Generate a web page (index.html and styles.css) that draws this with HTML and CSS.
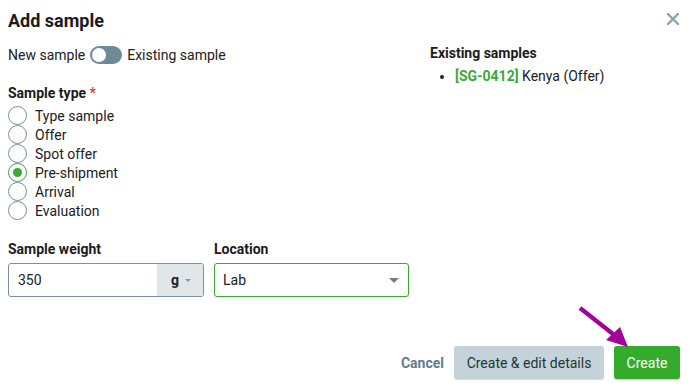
FILE: index.html
```html
<!DOCTYPE html>
<html>
<head>
<meta charset="utf-8">
<link rel="stylesheet" href="styles.css">
</head>
<body>
<div class="dialog">
  <div class="header">
    <h1 class="title">Add sample</h1>
    <button class="close" aria-label="Close">
      <svg width="12" height="12" viewBox="0 0 12 12"><path d="M1 1L11 11M11 1L1 11" stroke="#90a4ae" stroke-width="2.4" stroke-linecap="square"/></svg>
    </button>
  </div>
  <div class="content">
    <div class="left">
      <div class="toggle-row">
        <span>New sample</span>
        <span class="toggle"><span class="knob"></span></span>
        <span>Existing sample</span>
      </div>
      <div class="label label-type">Sample type <span class="req">*</span></div>
      <ul class="radios">
        <li><span class="radio"></span>Type sample</li>
        <li><span class="radio"></span>Offer</li>
        <li><span class="radio"></span>Spot offer</li>
        <li><span class="radio checked"></span>Pre-shipment</li>
        <li><span class="radio"></span>Arrival</li>
        <li><span class="radio"></span>Evaluation</li>
      </ul>
      <div class="fields">
        <div class="field weight">
          <div class="label">Sample weight</div>
          <div class="input-group">
            <span class="value">350</span>
            <span class="unit">g <span class="caret small"></span></span>
          </div>
        </div>
        <div class="field location">
          <div class="label">Location</div>
          <div class="select">
            <span class="value">Lab</span>
            <span class="caret"></span>
          </div>
        </div>
      </div>
    </div>
    <div class="right">
      <div class="label">Existing samples</div>
      <ul class="existing">
        <li><span class="code">[SG-0412]</span> Kenya (Offer)</li>
      </ul>
    </div>
  </div>
  <div class="footer">
    <button class="btn-link">Cancel</button>
    <button class="btn btn-grey">Create &amp; edit details</button>
    <button class="btn btn-green">Create</button>
  </div>
  <svg class="arrow" width="60" height="50" viewBox="575 302 60 50">
    <line x1="580" y1="308" x2="613" y2="334" stroke="#a4009c" stroke-width="4.2"/>
    <polygon points="606,340 620,327 628,347" fill="#a4009c"/>
  </svg>
</div>
</body>
</html>
```
FILE: styles.css
```css
* { box-sizing: border-box; }
html, body { margin: 0; padding: 0; background: #fff; }
body {
  font-family: Roboto, "Noto Sans", Arial, sans-serif;
  font-size: 14px;
  color: #212121;
  width: 692px;
  height: 389px;
  overflow: hidden;
}
.dialog {
  position: relative;
  padding: 0 12px 0 8px;
  height: 389px;
}
.header {
  display: flex;
  justify-content: space-between;
  align-items: center;
  height: 40px;
  padding-top: 1px;
}
.title {
  margin: 0;
  font-size: 18px;
  font-weight: 700;
  color: #1b1b1b;
  line-height: 22px;
}
.close {
  border: 0;
  background: none;
  padding: 0;
  margin-right: 1px;
  display: flex;
  margin-top: -3px;
}
.content {
  display: flex;
  margin-top: 1px;
}
.left { width: 422px; }
.right { flex: 1; padding-top: 2px; }
.toggle-row {
  display: flex;
  align-items: center;
  gap: 5px;
  height: 20px;
  margin-top: 4px;
}
.toggle {
  width: 32px;
  height: 18px;
  border-radius: 9px;
  background: #6e8a99;
  position: relative;
  display: inline-block;
}
.knob {
  position: absolute;
  left: 2px;
  top: 2px;
  width: 14px;
  height: 14px;
  border-radius: 50%;
  background: #fff;
}
.label {
  font-weight: 700;
  line-height: 20px;
  color: #1b1b1b;
}
.label-type { margin-top: 18px; }
.req { color: #e53935; }
.radios {
  list-style: none;
  margin: 3px 0 0;
  padding: 0;
}
.radios li {
  display: flex;
  align-items: center;
  height: 19px;
  gap: 8px;
  color: #212121;
}
.radio {
  width: 19px;
  height: 19px;
  border: 1.5px solid #7890a0;
  border-radius: 50%;
  display: inline-block;
  position: relative;
  background: #fff;
}
.radio.checked { border-color: #3aaa35; }
.radio.checked::after {
  content: "";
  position: absolute;
  left: 3.5px;
  top: 3.5px;
  width: 9px;
  height: 9px;
  border-radius: 50%;
  background: #3aaa35;
}
.fields {
  display: flex;
  gap: 10px;
  margin-top: 19px;
}
.field .label { margin-bottom: 4px; }
.weight { width: 196px; }
.location { width: 195px; }
.input-group {
  display: flex;
  height: 34px;
  border: 1px solid #7890a0;
  border-radius: 3px;
  overflow: hidden;
}
.input-group .value {
  flex: 1;
  display: flex;
  align-items: center;
  padding-left: 9px;
}
.unit {
  width: 46px;
  background: #e1e6e9;
  display: flex;
  align-items: center;
  justify-content: center;
  font-weight: 700;
  gap: 6px;
  padding-left: 2px;
}
.caret {
  width: 0;
  height: 0;
  border-left: 5px solid transparent;
  border-right: 5px solid transparent;
  border-top: 5px solid #7b7b7b;
}
.caret.small {
  border-left-width: 3.5px;
  border-right-width: 3.5px;
  border-top: 3.5px solid #8a9aa3;
}
.select {
  display: flex;
  align-items: center;
  justify-content: space-between;
  height: 34px;
  border: 1px solid #3aaa35;
  border-radius: 3px;
  padding: 0 9px 0 8px;
}
.existing {
  margin: 3px 0 0;
  padding-left: 25px;
  line-height: 20px;
}
.existing li::marker { font-size: 13px; }
.code { color: #3aaa35; font-weight: 700; }
.footer {
  position: absolute;
  right: 12px;
  top: 346px;
  display: flex;
  align-items: center;
  gap: 10px;
}
button { font-family: inherit; cursor: pointer; }
.btn-link {
  border: 0;
  background: none;
  color: #5f7d8c;
  font-weight: 700;
  font-size: 14px;
  padding: 0;
  margin-right: 0;
}
.btn {
  border: 0;
  height: 33px;
  border-radius: 3px;
  font-size: 14px;
  padding: 0 12px;
}
.btn-grey {
  background: #c4d3d9;
  color: #263238;
  width: 150px;
  box-shadow: 0 1px 1px rgba(0,0,0,0.15);
}
.btn-green {
  background: #35ab2b;
  color: #fff;
  width: 66px;
  box-shadow: 0 1px 1px rgba(0,0,0,0.2);
}
.arrow {
  position: absolute;
  left: 575px;
  top: 302px;
}
```
